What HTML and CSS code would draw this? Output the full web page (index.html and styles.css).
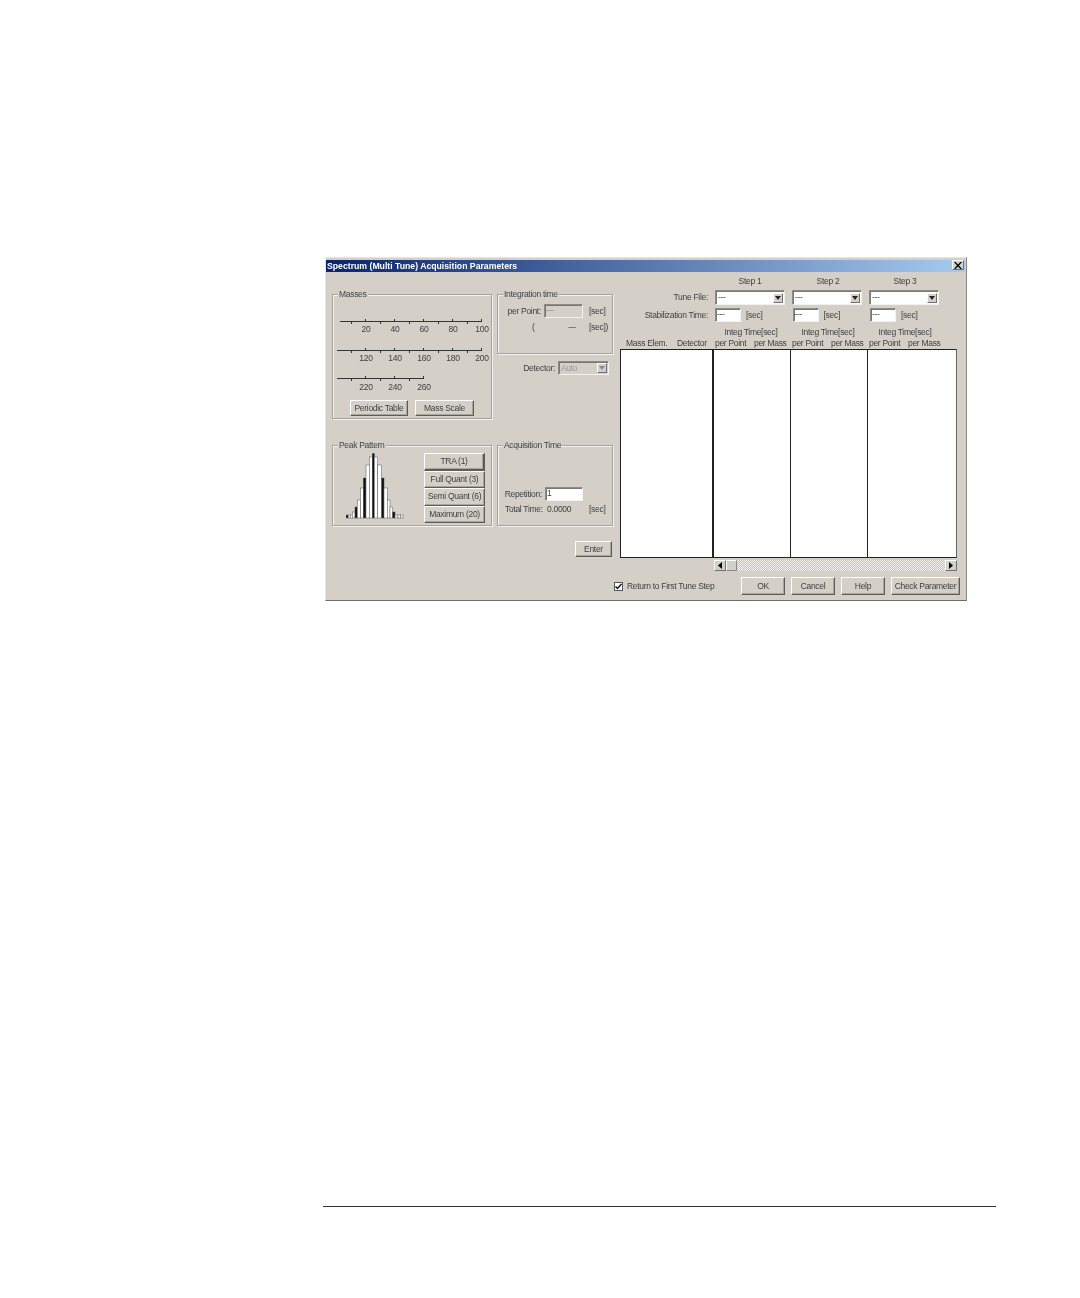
FILE: index.html
```html
<!DOCTYPE html>
<html lang="en">
<head>
<meta charset="utf-8">
<title>Spectrum (Multi Tune) Acquisition Parameters</title>
<link rel="stylesheet" href="styles.css">
</head>
<body>
<main class="page">
  <section class="dialog">
    <header class="titlebar">
      <span class="title">Spectrum (Multi Tune) Acquisition Parameters</span>
      <span class="close"><svg width="8" height="7" viewBox="0 0 8 7"><path d="M0 0l3 3.500L0 7h1.600L4 4.400 6.400 7H8L5 3.500 8 0H6.400L4 2.600 1.600 0z" fill="#000"/></svg></span>
    </header>
    <div class="body">
      <div class="left">
        <div class="left-top">
          <div class="group masses">
            <span class="legend">Masses</span>
            <svg class="ruler r1" width="150" height="5" viewBox="0 0 150 5"><path d="M3 2.500H145M28.500 0V2.500M57.500 0V2.500M86.500 0V2.500M115.500 0V2.500M144.500 0V2.500M14.500 2.500V5M43.500 2.500V5M72.500 2.500V5M101.500 2.500V5M130.500 2.500V5" stroke="#333" fill="none"/></svg>
            <div class="ticklabels"><span>20</span><span>40</span><span>60</span><span>80</span><span>100</span></div>
            <svg class="ruler r2" width="150" height="5" viewBox="0 0 150 5"><path d="M0 2.500H145M28.500 0V2.500M57.500 0V2.500M86.500 0V2.500M115.500 0V2.500M144.500 0V2.500M14.500 2.500V5M43.500 2.500V5M72.500 2.500V5M101.500 2.500V5M130.500 2.500V5" stroke="#333" fill="none"/></svg>
            <div class="ticklabels"><span>120</span><span>140</span><span>160</span><span>180</span><span>200</span></div>
            <svg class="ruler r3" width="150" height="5" viewBox="0 0 150 5"><path d="M0 2.500H87M28.500 0V2.500M57.500 0V2.500M86.500 0V2.500M14.500 2.500V5M43.500 2.500V5M72.500 2.500V5" stroke="#333" fill="none"/></svg>
            <div class="ticklabels t3"><span>220</span><span>240</span><span>260</span></div>
            <div class="mass-buttons">
              <button class="btn b-periodic">Periodic Table</button>
              <button class="btn b-scale">Mass Scale</button>
            </div>
          </div>
          <div class="side">
            <div class="group integration">
              <span class="legend">Integration time</span>
              <div class="int-row first">
                <span class="int-label">per Point:</span>
                <span class="input disabled">---</span>
                <span class="unit">[sec]</span>
              </div>
              <div class="int-row second">
                <span class="paren">(</span>
                <span class="dots">---</span>
                <span class="unit">[sec])</span>
              </div>
            </div>
            <div class="detector">
              <span>Detector:</span>
              <span class="select disabled det">Auto<i class="arrow off"></i></span>
            </div>
          </div>
        </div>
        <div class="left-bottom">
          <div class="group peak">
            <span class="legend">Peak Pattern</span>
            <svg class="peaks" width="62" height="66" viewBox="0 0 62 66">
              <g fill="#fff" stroke="#555" stroke-width=".5">
                <rect x="0" y="62" width="2.300" height="3" fill="#222"/><rect x="2.300" y="62" width="2" height="3"/><rect x="4.300" y="62" width="2" height="3"/>
                <rect x="6.300" y="59" width="2.700" height="6"/><rect x="9" y="54" width="2.300" height="11" fill="#111"/><rect x="11.300" y="47" width="3.400" height="18"/>
                <rect x="14.700" y="35" width="2.600" height="30"/><rect x="17.300" y="25" width="2.700" height="40" fill="#111"/><rect x="20" y="12" width="3.300" height="53"/>
                <rect x="23.300" y="4" width="3" height="61"/><rect x="26.300" y="0.500" width="2" height="64.500" fill="#111"/><rect x="28.300" y="4" width="3.400" height="61"/>
                <rect x="31.700" y="12" width="4" height="53"/><rect x="35.700" y="25" width="2.300" height="40" fill="#111"/><rect x="38" y="35" width="3.300" height="30"/>
                <rect x="41.300" y="47" width="2.700" height="18"/><rect x="44" y="54" width="2.700" height="11"/><rect x="46.700" y="59" width="2.300" height="6" fill="#111"/>
                <rect x="49" y="62" width="3" height="3"/><rect x="52" y="62" width="2.500" height="3"/><rect x="54.500" y="62" width="2.500" height="3"/>
              </g>
            </svg>
            <div class="peak-buttons">
              <button class="btn default">TRA (1)</button>
              <button class="btn">Full Quant (3)</button>
              <button class="btn">Semi Quant (6)</button>
              <button class="btn">Maximum (20)</button>
            </div>
          </div>
          <div class="group acquisition">
            <span class="legend">Acquisition Time</span>
            <div class="rep-row"><span class="rep-label">Repetition:</span><span class="input rep">1</span></div>
            <div class="total-row"><span class="total-label">Total Time:</span><span class="total">0.0000</span><span class="unit">[sec]</span></div>
          </div>
        </div>
        <div class="enter-row"><button class="btn enter">Enter</button></div>
      </div>
      <div class="right">
        <div class="steps">
          <span class="step s1">Step 1</span><span class="step s2">Step 2</span><span class="step s3">Step 3</span>
        </div>
        <div class="tune-row">
          <span class="row-label">Tune File:</span>
          <span class="select wide">---<i class="arrow"></i></span>
          <span class="select wide">---<i class="arrow"></i></span>
          <span class="select wide">---<i class="arrow"></i></span>
        </div>
        <div class="stab-row">
          <span class="row-label">Stabilization Time:</span>
          <span class="stab-cell"><span class="input small">---</span><span>[sec]</span></span>
          <span class="stab-cell"><span class="input small">---</span><span>[sec]</span></span>
          <span class="stab-cell"><span class="input small">---</span><span>[sec]</span></span>
        </div>
        <div class="integ-row">
          <span>Integ Time[sec]</span><span>Integ Time[sec]</span><span>Integ Time[sec]</span>
        </div>
        <div class="head-row">
          <span class="hd-mass">Mass Elem.</span><span class="hd-det">Detector</span>
          <span class="hd-step"><span>per Point</span><span>per Mass</span></span>
          <span class="hd-step"><span>per Point</span><span>per Mass</span></span>
          <span class="hd-step"><span>per Point</span><span>per Mass</span></span>
        </div>
        <div class="table">
          <div class="col c0"></div><div class="col c1"></div><div class="col c2"></div><div class="col c3"></div>
        </div>
        <div class="scrollbar">
          <span class="sb-btn"><svg width="4" height="7" viewBox="0 0 4 7"><path d="M4 0v7L0 3.500z"/></svg></span>
          <span class="sb-thumb"></span>
          <span class="sb-track"></span>
          <span class="sb-btn"><svg width="4" height="7" viewBox="0 0 4 7"><path d="M0 0v7l4-3.500z"/></svg></span>
        </div>
        <div class="actions">
          <label class="check"><span class="box"><svg width="7" height="7" viewBox="0 0 7 7"><path d="M.5 3.500l2 2 4-4.500" fill="none" stroke="#111" stroke-width="1.500"/></svg></span>Return to First Tune Step</label>
          <button class="btn ok">OK</button>
          <button class="btn cancel">Cancel</button>
          <button class="btn help">Help</button>
          <button class="btn check-param">Check Parameter</button>
        </div>
      </div>
    </div>
  </section>
  <hr class="rule">
</main>
</body>
</html>
```
FILE: styles.css
```css
* { box-sizing: border-box; }
html, body { margin: 0; background: #fff; }
body { font: 8.500px/11px "Liberation Sans", Arial, sans-serif; letter-spacing: -.3px; color: #3f3f3f; }
.page { height: 1298px; padding: 257px 0 0 323px; width: 1080px; }
.dialog { margin-left: 2px; width: 642px; height: 344px; background: #d4d0c8; border-top: 1px solid #e8e6e1; border-right: 1px solid #8a8880; border-bottom: 1px solid #6e6c66; border-left: 1px solid #e8e6e1; padding-top: 2px; filter: blur(.3px); }
.titlebar { height: 12px; margin: 0 1px 0 0; background: linear-gradient(90deg, #0a246a, #a6caf0); display: flex; align-items: flex-start; justify-content: space-between; padding: 0 1px 0 1px; }
.title { color: #fff; font-weight: 700; font-size: 8.700px; letter-spacing: 0; line-height: 12px; }
.close { width: 12px; height: 10px; background: #d4d0c8; border: 1px solid; border-color: #fff #707070 #707070 #fff; display: flex; align-items: center; justify-content: center; }
.body { display: flex; }
.left { width: 288px; margin-left: 6px; padding-top: 22px; flex: none; }
.left-top { display: flex; gap: 5px; height: 151px; }
.group { border: 1px solid #a5a39c; box-shadow: inset 1px 1px 0 #f4f3f0, 1px 1px 0 #f4f3f0; position: relative; }
.legend { position: absolute; top: -6px; left: 5px; padding: 0 1px; background: #d4d0c8; white-space: nowrap; color: #444; }
.masses { width: 160px; height: 125px; padding-left: 4px; }
.ruler { display: block; }
.r1 { margin-top: 24px; }
.r2 { margin-top: 13px; }
.r3 { margin-top: 12px; }
.ticklabels { height: 11px; display: flex; padding-left: 14.500px; }
.ticklabels span { width: 29px; text-align: center; flex: none; }
.t3 { margin-top: 1px; }
.mass-buttons { display: flex; gap: 7px; margin: 7px 0 0 13px; }
.btn { font: inherit; letter-spacing: inherit; color: #3f3f3f; background: #d4d0c8; border: 1px solid; border-color: #fff #5c5c58 #5c5c58 #fff; box-shadow: inset -1px -1px 0 #a8a59d; padding: 0; text-align: center; border-radius: 0; white-space: nowrap; }
.b-periodic { width: 58px; height: 16px; }
.b-scale { width: 59px; height: 16px; }
.side { width: 116px; }
.integration { height: 60px; width: 116px; }
.int-row { display: flex; align-items: center; }
.first { margin-top: 9px; height: 14px; }
.second { margin-top: 4px; height: 11px; }
.int-label { width: 43px; margin-right: 3px; text-align: right; white-space: nowrap; }
.input { background: #fff; border: 1px solid; border-color: #8d8b84 #f2f1ee #f2f1ee #8d8b84; display: block; padding: 0 1px; line-height: 11px; box-shadow: inset 1px 1px 0 #777; flex: none; }
.input.disabled { width: 39px; height: 14px; background: #d4d0c8; color: #888; }
.first .unit { margin-left: 6px; }
.paren { margin-left: 34px; width: 30px; }
.dots { width: 20px; text-align: center; }
.second .unit { margin-left: 7px; white-space: nowrap; }
.detector { display: flex; justify-content: flex-end; align-items: center; gap: 3px; margin-top: 7px; padding-right: 4px; height: 14px; }
.select { display: flex; justify-content: space-between; align-items: center; padding-left: 2px; background: #fff; border: 1px solid; border-color: #8d8b84 #f2f1ee #f2f1ee #8d8b84; box-shadow: inset 1px 1px 0 #777; height: 14px; flex: none; }
.select.det { width: 51px; background: #d4d0c8; color: #999; }
.select.wide { width: 70px; height: 15px; }
.arrow { width: 10px; height: 10px; margin-right: 1px; background: #d4d0c8; border: 1px solid; border-color: #fff #707070 #707070 #fff; position: relative; flex: none; }
.arrow::after { content: ""; position: absolute; left: 1px; top: 2px; border: 3px solid transparent; border-top: 4px solid #222; border-bottom: 0; }
.arrow.off::after { border-top-color: #888; }
.left-bottom { display: flex; gap: 5px; height: 81px; }
.peak { width: 160px; height: 81px; display: flex; }
.peaks { margin: 7px 0 0 13px; flex: none; }
.peak-buttons { display: flex; flex-direction: column; margin: 7px 0 0 16px; }
.peak-buttons .btn { width: 61px; height: 17.500px; }
.btn.default { border-right-width: 2px; border-bottom-width: 2px; }
.acquisition { width: 116px; height: 81px; }
.rep-row { display: flex; align-items: center; margin-top: 41px; height: 14px; }
.rep-label { width: 44px; margin-right: 3px; text-align: right; white-space: nowrap; }
.input.rep { width: 38px; height: 14px; }
.total-row { display: flex; align-items: center; margin: 3px 0 0 7px; height: 11px; }
.total-label { width: 42px; white-space: nowrap; flex: none; }
.total { width: 42px; flex: none; }
.enter-row { display: flex; justify-content: flex-end; margin-top: 15px; padding-right: 8px; }
.enter { width: 37px; height: 16px; }
.right { width: 340px; flex: none; padding-top: 4px; }
.steps { display: grid; grid-template-columns: 91px 78px 78px 76px; height: 11px; text-align: center; }
.steps .s1 { grid-column: 2; }
.tune-row, .stab-row { display: flex; align-items: center; }
.tune-row { height: 15px; margin-top: 3px; gap: 7px; }
.row-label { width: 88px; text-align: right; flex: none; margin-right: 7px; white-space: nowrap; }
.tune-row .row-label { margin-right: 0; }
.stab-row { margin-top: 3px; height: 14px; }
.stab-cell { display: flex; width: 77.500px; align-items: center; gap: 5px; flex: none; }
.input.small { width: 26px; height: 14px; }
.integ-row { display: flex; padding-left: 92.500px; margin-top: 5px; height: 11px; }
.integ-row span { width: 77px; text-align: center; flex: none; }
.head-row { display: flex; height: 11px; }
.hd-mass { width: 50px; padding-left: 6px; white-space: nowrap; flex: none; }
.hd-det { width: 45px; padding-left: 7px; flex: none; white-space: nowrap; }
.hd-step { width: 77px; display: flex; flex: none; white-space: nowrap; }
.hd-step span { width: 39px; flex: none; }
.table { display: flex; height: 209px; width: 337px; background: #fff; border: 1px solid #222; border-right-color: #666; }
.col { border-right: 1px solid #222; height: 100%; flex: none; }
.c0 { width: 93px; border-right-width: 2px; }
.c1, .c2 { width: 77px; }
.c3 { border-right: 0; flex: 1; }
.scrollbar { display: flex; margin: 2px 0 0 94px; width: 243px; height: 11px; }
.sb-btn { width: 12px; background: #d4d0c8; border: 1px solid; border-color: #fff #707070 #707070 #fff; display: flex; align-items: center; justify-content: center; flex: none; }
.sb-thumb { width: 11px; background: #d4d0c8; border: 1px solid; border-color: #fff #888 #888 #fff; flex: none; }
.sb-track { flex: 1; background: repeating-conic-gradient(#f4f3f0 0 25%, #c4c0b8 0 50%) 0 0 / 2px 2px; }
.actions { display: flex; align-items: center; margin: 6px 0 0 -6px; height: 18px; }
.check { display: flex; align-items: center; gap: 4px; width: 127px; flex: none; white-space: nowrap; }
.box { width: 9px; height: 9px; background: #fff; border: 1px solid #555; display: flex; align-items: center; justify-content: center; flex: none; }
.actions .btn { height: 18px; margin-right: 6px; flex: none; }
.ok, .cancel, .help { width: 44px; }
.actions .check-param { width: 69px; margin-right: 0; }
.rule { margin: 605px 0 0; width: 673px; height: 1px; border: 0; background: #333; }
```
